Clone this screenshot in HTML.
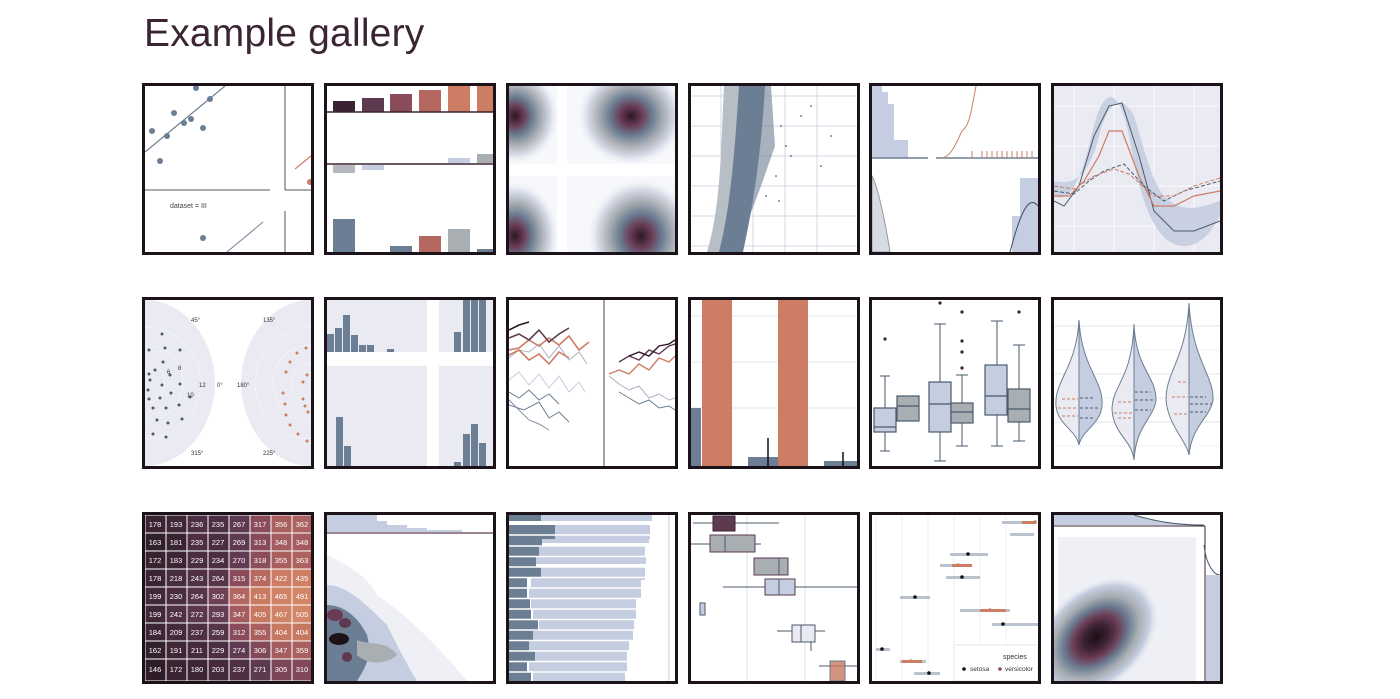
<!DOCTYPE html>
<html><head><meta charset="utf-8"><style>
body{margin:0;width:1400px;height:699px;background:#fff;position:relative;overflow:hidden;font-family:"Liberation Sans",sans-serif}
h1{position:absolute;left:144px;top:12px;margin:0;font-weight:400;font-size:39px;color:#3b2533;letter-spacing:0.2px}
.t{position:absolute;width:172px;height:172px;border:3px solid #1c1219;box-sizing:border-box;overflow:hidden;background:#fff}
.t svg{display:block;width:166px;height:166px}
</style></head><body>
<h1>Example gallery</h1>

<!-- Row 1 -->
<div class="t" style="left:142px;top:83px"><svg viewBox="0 0 166 166">
<line x1="0" y1="66" x2="80" y2="0" stroke="#6c7e93" stroke-width="1.2"/>
<g fill="#6c7e93"><circle cx="51" cy="2" r="3"/><circle cx="65" cy="13" r="3"/><circle cx="29" cy="27" r="3"/><circle cx="39" cy="37" r="3"/><circle cx="46" cy="33" r="3"/><circle cx="58" cy="42" r="3"/><circle cx="22" cy="50" r="3"/><circle cx="7" cy="45" r="3"/><circle cx="15" cy="75" r="3"/><circle cx="58" cy="152" r="3"/></g>
<line x1="0" y1="104" x2="125" y2="104" stroke="#555" stroke-width="1"/>
<line x1="140" y1="0" x2="140" y2="104" stroke="#555" stroke-width="1"/>
<line x1="140" y1="104" x2="166" y2="104" stroke="#555"/>
<line x1="150" y1="83" x2="166" y2="70" stroke="#cc7d63" stroke-width="1.2"/><circle cx="165" cy="96" r="3" fill="#cc7d63"/>
<text x="25" y="122" font-size="7" fill="#444">dataset = III</text>
<line x1="140" y1="125" x2="140" y2="166" stroke="#555"/>
<line x1="82" y1="166" x2="118" y2="136" stroke="#8a96a8" stroke-width="1.2"/>
</svg></div>

<div class="t" style="left:324px;top:83px"><svg viewBox="0 0 166 166">
<rect x="6" y="15" width="22" height="11" fill="#3b2233"/><rect x="35" y="12" width="22" height="14" fill="#5e3a51"/><rect x="63" y="8" width="22" height="18" fill="#8a4c5b"/><rect x="92" y="4" width="22" height="22" fill="#b4685f"/><rect x="121" y="0" width="22" height="26" fill="#cc7d63"/><rect x="150" y="0" width="18" height="26" fill="#cc7d63"/>
<line x1="0" y1="26" x2="166" y2="26" stroke="#3b2233" stroke-width="1.5"/>
<rect x="121" y="72" width="22" height="5" fill="#c5cde0"/><rect x="150" y="68" width="18" height="9" fill="#a9aeb3"/>
<line x1="0" y1="78" x2="166" y2="78" stroke="#3b2233" stroke-width="1.5"/>
<rect x="6" y="79" width="22" height="8" fill="#b5b8bc"/><rect x="35" y="79" width="22" height="5" fill="#c5cde0"/>
<rect x="6" y="133" width="22" height="33" fill="#6c7e93"/><rect x="63" y="160" width="22" height="6" fill="#6c7e93"/><rect x="92" y="150" width="22" height="16" fill="#b4685f"/><rect x="121" y="143" width="22" height="23" fill="#a9aeb3"/><rect x="150" y="163" width="18" height="3" fill="#6c7e93"/>
</svg></div>

<div class="t" style="left:506px;top:83px"><svg viewBox="0 0 166 166"><defs>
<radialGradient id="k1"><stop offset="0" stop-color="#2b1825"/><stop offset=".2" stop-color="#6a3b55"/><stop offset=".4" stop-color="#6c7e93"/><stop offset=".6" stop-color="#a9aeb3"/><stop offset=".8" stop-color="#d4d9e6"/><stop offset="1" stop-color="#f4f5f9" stop-opacity="0"/></radialGradient></defs>
<rect width="166" height="166" fill="#f7f8fb"/><rect x="0" y="78" width="166" height="12" fill="#fff"/><rect x="48" y="0" width="10" height="166" fill="#fff"/>
<ellipse cx="6" cy="30" rx="44" ry="48" fill="url(#k1)"/><ellipse cx="122" cy="30" rx="54" ry="50" fill="url(#k1)"/>
<ellipse cx="6" cy="150" rx="44" ry="55" fill="url(#k1)"/><ellipse cx="132" cy="150" rx="54" ry="58" fill="url(#k1)"/>
</svg></div>

<div class="t" style="left:688px;top:83px"><svg viewBox="0 0 166 166">
<g stroke="#c8cedc" stroke-width=".8"><line x1="0" y1="10" x2="166" y2="10"/><line x1="0" y1="40" x2="166" y2="40"/><line x1="0" y1="70" x2="166" y2="70"/><line x1="0" y1="100" x2="166" y2="100"/><line x1="0" y1="130" x2="166" y2="130"/><line x1="0" y1="160" x2="166" y2="160"/><line x1="30" y1="0" x2="30" y2="166"/><line x1="62" y1="0" x2="62" y2="166"/><line x1="94" y1="0" x2="94" y2="166"/><line x1="126" y1="0" x2="126" y2="166"/></g>
<path d="M16 166 C30 120 30 60 33 0 L60 0 C60 60 50 120 40 166Z" fill="#b8bec6"/>
<path d="M28 166 C40 120 44 60 48 0 L74 0 C70 70 62 120 52 166Z" fill="#6c7e93"/>
<path d="M60 0 L80 0 L84 60 L70 100 L55 140Z" fill="#6c7e93" opacity=".6"/>
<g fill="#3b2233"><circle cx="90" cy="40" r=".8"/><circle cx="100" cy="70" r=".8"/><circle cx="110" cy="30" r=".8"/><circle cx="120" cy="20" r=".8"/><circle cx="85" cy="90" r=".8"/><circle cx="95" cy="60" r=".8"/><circle cx="140" cy="50" r=".8"/><circle cx="130" cy="80" r=".8"/><circle cx="75" cy="110" r=".8"/><circle cx="88" cy="115" r=".8"/></g>
</svg></div>

<div class="t" style="left:869px;top:83px"><svg viewBox="0 0 166 166">
<path d="M0 0 H10 V6 H16 V18 H22 V54 H36 V72 H0Z" fill="#c5cde0"/>
<line x1="0" y1="72" x2="56" y2="72" stroke="#6c7e93" stroke-width="1.5"/><line x1="64" y1="72" x2="166" y2="72" stroke="#6c7e93" stroke-width="1.5"/>
<path d="M70 72 C80 70 85 55 90 45 C98 40 100 20 104 0" fill="none" stroke="#cc7d63" stroke-width="1"/>
<g stroke="#cc7d63" stroke-width="1"><line x1="100" y1="65" x2="100" y2="72"/><line x1="110" y1="65" x2="110" y2="72"/><line x1="115" y1="65" x2="115" y2="72"/><line x1="120" y1="65" x2="120" y2="72"/><line x1="125" y1="65" x2="125" y2="72"/><line x1="130" y1="65" x2="130" y2="72"/><line x1="135" y1="65" x2="135" y2="72"/><line x1="140" y1="65" x2="140" y2="72"/><line x1="145" y1="65" x2="145" y2="72"/><line x1="150" y1="65" x2="150" y2="72"/><line x1="155" y1="65" x2="155" y2="72"/><line x1="160" y1="65" x2="160" y2="72"/></g>
<path d="M0 90 C6 100 14 140 18 166 L0 166Z" fill="#d5dae4" stroke="#999"/>
<path d="M140 166 V130 H148 V92 H166 V166Z" fill="#c5cde0"/><path d="M138 166 C150 120 158 110 166 120" fill="none" stroke="#3b4a5a"/>
</svg></div>

<div class="t" style="left:1051px;top:83px"><svg viewBox="0 0 166 166">
<rect width="166" height="166" fill="#eaeaf2"/>
<g stroke="#fff" stroke-width=".8"><line x1="0" y1="20" x2="166" y2="20"/><line x1="0" y1="60" x2="166" y2="60"/><line x1="0" y1="100" x2="166" y2="100"/><line x1="0" y1="140" x2="166" y2="140"/><line x1="20" y1="0" x2="20" y2="166"/><line x1="60" y1="0" x2="60" y2="166"/><line x1="100" y1="0" x2="100" y2="166"/><line x1="140" y1="0" x2="140" y2="166"/></g>
<path d="M0 110 C20 120 30 80 40 40 C50 0 65 0 75 50 C85 110 100 160 130 160 C150 160 160 140 166 130 V115 C150 120 130 130 110 110 C95 90 90 60 80 30 C70 10 55 10 45 50 C35 90 20 100 0 95Z" fill="#c5cde0" opacity=".9"/>
<polyline points="0,115 10,120 25,100 40,50 55,20 68,17 85,70 100,125 120,145 140,145 166,135" fill="none" stroke="#4a5a6c" stroke-width="1"/>
<polyline points="0,110 15,110 30,95 45,70 55,45 68,45 85,90 100,120 120,120 140,110 166,105" fill="none" stroke="#cc7d63" stroke-width="1.2"/>
<polyline points="0,105 20,108 35,95 50,85 70,78 90,100 110,115 130,105 166,95" fill="none" stroke="#4a5a6c" stroke-width="1" stroke-dasharray="4 2"/>
<polyline points="0,100 20,103 40,90 60,83 75,88 100,110 120,110 140,100 166,92" fill="none" stroke="#cc7d63" stroke-width="1" stroke-dasharray="4 2"/>
</svg></div>

<!-- Row 2 -->
<div class="t" style="left:142px;top:297px"><svg viewBox="0 0 166 166">
<path d="M0 0 C40 0 70 40 70 83 C70 126 40 166 0 166Z" fill="#eaeaf2"/><path d="M166 0 C126 0 96 40 96 83 C96 126 126 166 166 166Z" fill="#eaeaf2"/>
<g fill="none" stroke="#fff" stroke-dasharray="1.5 1.5" stroke-width=".7"><circle cx="0" cy="83" r="20"/><circle cx="0" cy="83" r="38"/><circle cx="0" cy="83" r="56"/><circle cx="166" cy="83" r="20"/><circle cx="166" cy="83" r="38"/><circle cx="166" cy="83" r="56"/></g>
<g font-size="6" fill="#333"><text x="46" y="22">45°</text><text x="118" y="22">135°</text><text x="54" y="87">12</text><text x="42" y="97">10</text><text x="33" y="70">8</text><text x="22" y="74">6</text><text x="72" y="87">0°</text><text x="92" y="87">180°</text><text x="46" y="155">315°</text><text x="118" y="155">225°</text></g>
<g fill="#4a5a6c"><circle cx="17" cy="34" r="1.5"/><circle cx="4" cy="50" r="1.5"/><circle cx="20" cy="48" r="1.5"/><circle cx="35" cy="50" r="1.5"/><circle cx="18" cy="62" r="1.5"/><circle cx="10" cy="70" r="1.5"/><circle cx="25" cy="75" r="1.5"/><circle cx="4" cy="74" r="1.5"/><circle cx="17" cy="85" r="1.5"/><circle cx="35" cy="84" r="1.5"/><circle cx="3" cy="90" r="1.5"/><circle cx="26" cy="93" r="1.5"/><circle cx="45" cy="97" r="1.5"/><circle cx="15" cy="98" r="1.5"/><circle cx="4" cy="99" r="1.5"/><circle cx="34" cy="105" r="1.5"/><circle cx="21" cy="108" r="1.5"/><circle cx="8" cy="108" r="1.5"/><circle cx="37" cy="119" r="1.5"/><circle cx="12" cy="120" r="1.5"/><circle cx="23" cy="123" r="1.5"/><circle cx="8" cy="134" r="1.5"/><circle cx="21" cy="137" r="1.5"/><circle cx="5" cy="80" r="1.5"/></g>
<g fill="#cc7d63"><circle cx="161" cy="48" r="1.5"/><circle cx="152" cy="53" r="1.5"/><circle cx="145" cy="62" r="1.5"/><circle cx="162" cy="75" r="1.5"/><circle cx="141" cy="72" r="1.5"/><circle cx="158" cy="82" r="1.5"/><circle cx="138" cy="93" r="1.5"/><circle cx="158" cy="99" r="1.5"/><circle cx="160" cy="106" r="1.5"/><circle cx="140" cy="104" r="1.5"/><circle cx="163" cy="112" r="1.5"/><circle cx="141" cy="115" r="1.5"/><circle cx="145" cy="125" r="1.5"/><circle cx="153" cy="134" r="1.5"/><circle cx="162" cy="141" r="1.5"/></g>
</svg></div>

<div class="t" style="left:324px;top:297px"><svg viewBox="0 0 166 166">
<rect width="100" height="52" fill="#eaeaf2"/><rect x="112" width="54" height="52" fill="#eaeaf2"/><rect y="66" width="100" height="100" fill="#eaeaf2"/><rect x="112" y="66" width="54" height="100" fill="#eaeaf2"/>
<g fill="#6c7e93"><rect x="0" y="34" width="7" height="18"/><rect x="8" y="28" width="7" height="24"/><rect x="16" y="15" width="7" height="37"/><rect x="24" y="35" width="7" height="17"/><rect x="32" y="45" width="7" height="7"/><rect x="40" y="45" width="7" height="7"/><rect x="60" y="49" width="7" height="3"/><rect x="127" y="32" width="7" height="20"/><rect x="136" y="0" width="7" height="52"/><rect x="144" y="0" width="7" height="52"/><rect x="152" y="0" width="7" height="52"/>
<rect x="9" y="117" width="7" height="49"/><rect x="17" y="146" width="7" height="20"/><rect x="136" y="134" width="7" height="32"/><rect x="144" y="124" width="7" height="42"/><rect x="152" y="143" width="7" height="23"/><rect x="127" y="162" width="7" height="4"/></g>
</svg></div>

<div class="t" style="left:506px;top:297px"><svg viewBox="0 0 166 166">
<line x1="95" y1="0" x2="95" y2="166" stroke="#5e3a51"/>
<g fill="none" stroke-width="1"><polyline points="0,58 10,50 20,52 30,44 40,58 50,46 60,60 70,52 78,64" stroke="#a9b4c4"/><polyline points="0,80 10,72 20,85 30,74 40,88 50,76 60,92 70,82 76,92" stroke="#c5cde0"/><polyline points="0,92 10,98 20,90 30,100 40,94 50,104" stroke="#6c7e93"/><polyline points="0,105 15,110 30,102 40,118 50,112 60,122" stroke="#6c7e93"/><polyline points="0,100 10,110 20,120 30,124 40,130" stroke="#8290a4"/></g>
<g fill="none" stroke-width="1.6"><polyline points="0,50 10,48 20,40 30,46 40,38 50,45 60,36 70,50 80,42" stroke="#cc7d63"/><polyline points="0,55 10,50 20,60 30,54 40,64 50,52 60,58" stroke="#cc7d63"/><polyline points="0,38 10,34 20,40 30,30 40,42 50,34 60,28" stroke="#5e3a51"/><polyline points="0,30 10,25 20,22" stroke="#2b1825"/></g>
<g fill="none" stroke-width="1.4"><polyline points="100,74 110,70 120,74 130,64 140,70 150,58 160,62 166,56" stroke="#cc7d63"/><polyline points="110,62 120,56 130,60 140,50 150,54 160,46 166,44" stroke="#5e3a51"/><polyline points="120,56 130,52 140,56 150,46 160,44 166,40" stroke="#2b1825"/><polyline points="100,76 110,84 120,90 130,86 140,98 150,94 160,100 166,98" stroke="#a9b4c4" stroke-width="1"/><polyline points="110,92 120,98 130,104 140,100 150,108 160,106 166,110" stroke="#6c7e93" stroke-width="1"/></g>
</svg></div>

<div class="t" style="left:688px;top:297px"><svg viewBox="0 0 166 166">
<g stroke="#e1e4ec"><line x1="0" y1="16" x2="166" y2="16"/><line x1="0" y1="62" x2="166" y2="62"/><line x1="0" y1="108" x2="166" y2="108"/></g>
<rect x="0" y="108" width="10" height="58" fill="#6c7e93"/><rect x="11" y="0" width="30" height="166" fill="#cc7d63"/><rect x="57" y="157" width="30" height="9" fill="#6c7e93"/><line x1="77" y1="138" x2="77" y2="166" stroke="#111" stroke-width="1.5"/><rect x="87" y="0" width="30" height="166" fill="#cc7d63"/><rect x="133" y="161" width="33" height="5" fill="#6c7e93"/><line x1="152" y1="152" x2="152" y2="166" stroke="#111" stroke-width="1.5"/>
</svg></div>

<div class="t" style="left:869px;top:297px"><svg viewBox="0 0 166 166">
<g stroke="#4a5a6c" stroke-width="1" fill="none"><line x1="13" y1="76" x2="13" y2="151"/><line x1="8" y1="151" x2="18" y2="151"/><line x1="8" y1="76" x2="18" y2="76"/><line x1="35" y1="96" x2="35" y2="116"/><line x1="30" y1="116" x2="40" y2="116"/><line x1="68" y1="24" x2="68" y2="161"/><line x1="62" y1="24" x2="74" y2="24"/><line x1="62" y1="161" x2="74" y2="161"/><line x1="90" y1="75" x2="90" y2="146"/><line x1="84" y1="146" x2="96" y2="146"/><line x1="84" y1="75" x2="96" y2="75"/><line x1="125" y1="21" x2="125" y2="146"/><line x1="119" y1="21" x2="131" y2="21"/><line x1="119" y1="146" x2="131" y2="146"/><line x1="147" y1="45" x2="147" y2="141"/><line x1="141" y1="141" x2="153" y2="141"/><line x1="141" y1="45" x2="153" y2="45"/></g>
<g stroke="#4a5a6c" stroke-width="1.2"><rect x="2" y="108" width="22" height="24" fill="#c5cde0"/><line x1="2" y1="127" x2="24" y2="127"/><rect x="25" y="96" width="22" height="25" fill="#a9aeb3"/><line x1="25" y1="106" x2="47" y2="106"/><rect x="57" y="82" width="22" height="50" fill="#c5cde0"/><line x1="57" y1="104" x2="79" y2="104"/><rect x="79" y="103" width="22" height="20" fill="#a9aeb3"/><line x1="79" y1="112" x2="101" y2="112"/><rect x="113" y="65" width="22" height="50" fill="#c5cde0"/><line x1="113" y1="96" x2="135" y2="96"/><rect x="136" y="89" width="22" height="33" fill="#a9aeb3"/><line x1="136" y1="109" x2="158" y2="109"/></g>
<g fill="#3b2233"><circle cx="13" cy="39" r="1.6"/><circle cx="68" cy="3" r="1.6"/><circle cx="90" cy="12" r="1.6"/><circle cx="90" cy="41" r="1.6"/><circle cx="90" cy="52" r="1.6"/><circle cx="90" cy="68" r="1.6"/><circle cx="147" cy="12" r="1.6"/></g>
</svg></div>

<div class="t" style="left:1051px;top:297px"><svg viewBox="0 0 166 166">
<g stroke="#e1e4ec"><line x1="0" y1="26" x2="166" y2="26"/><line x1="0" y1="74" x2="166" y2="74"/><line x1="0" y1="122" x2="166" y2="122"/><line x1="0" y1="50" x2="166" y2="50" stroke-dasharray="1 1"/><line x1="0" y1="98" x2="166" y2="98" stroke-dasharray="1 1"/><line x1="0" y1="146" x2="166" y2="146" stroke-dasharray="1 1"/></g>
<g stroke="#6c7e93" stroke-width="1"><path d="M25 20 C22 70 0 80 2 106 C4 125 22 130 25 145Z" fill="#eaeaf2"/><path d="M25 20 C28 70 50 80 48 106 C46 125 28 130 25 145Z" fill="#c5cde0"/><line x1="25" y1="20" x2="25" y2="145"/>
<path d="M80 24 C78 80 58 85 58 110 C60 135 78 140 80 160Z" fill="#eaeaf2"/><path d="M80 24 C82 70 102 75 102 100 C100 118 82 125 80 160Z" fill="#c5cde0"/><line x1="80" y1="24" x2="80" y2="160"/>
<path d="M135 3 C132 60 112 70 112 100 C114 125 132 140 135 155Z" fill="#eaeaf2"/><path d="M135 3 C138 60 160 75 159 100 C156 118 138 125 135 155Z" fill="#c5cde0"/><line x1="135" y1="3" x2="135" y2="155"/></g>
<g stroke-dasharray="3 2" stroke-width="1"><line x1="8" y1="99" x2="24" y2="99" stroke="#cc7d63"/><line x1="4" y1="108" x2="24" y2="108" stroke="#cc7d63"/><line x1="8" y1="116" x2="24" y2="116" stroke="#cc7d63"/><line x1="26" y1="98" x2="40" y2="98" stroke="#4a5a6c"/><line x1="26" y1="108" x2="46" y2="108" stroke="#4a5a6c"/><line x1="26" y1="118" x2="40" y2="118" stroke="#4a5a6c"/><line x1="64" y1="102" x2="79" y2="102" stroke="#cc7d63"/><line x1="60" y1="113" x2="79" y2="113" stroke="#cc7d63"/><line x1="64" y1="118" x2="79" y2="118" stroke="#cc7d63"/><line x1="81" y1="92" x2="97" y2="92" stroke="#4a5a6c"/><line x1="81" y1="100" x2="101" y2="100" stroke="#4a5a6c"/><line x1="81" y1="110" x2="97" y2="110" stroke="#4a5a6c"/><line x1="124" y1="82" x2="134" y2="82" stroke="#cc7d63"/><line x1="118" y1="97" x2="134" y2="97" stroke="#cc7d63"/><line x1="120" y1="114" x2="134" y2="114" stroke="#cc7d63"/><line x1="136" y1="97" x2="152" y2="97" stroke="#4a5a6c"/><line x1="136" y1="104" x2="158" y2="104" stroke="#4a5a6c"/><line x1="136" y1="112" x2="152" y2="112" stroke="#4a5a6c"/></g>
</svg></div>

<!-- Row 3 -->
<div class="t" style="left:142px;top:512px"><svg viewBox="0 0 166 166" font-size="7.5" text-anchor="middle" fill="#fff">
<g stroke="#fff" stroke-width="1">
<rect x="0" y="0" width="21" height="18" fill="#3a2433"/><rect x="21" y="0" width="21" height="18" fill="#3e2636"/><rect x="42" y="0" width="21" height="18" fill="#4d2e42"/><rect x="63" y="0" width="21" height="18" fill="#4c2e42"/><rect x="84" y="0" width="21" height="18" fill="#5e3a51"/><rect x="105" y="0" width="21" height="18" fill="#8a4c5b"/><rect x="126" y="0" width="21" height="18" fill="#a95f5e"/><rect x="147" y="0" width="21" height="18" fill="#ad625f"/>
<rect x="0" y="18" width="21" height="18" fill="#33202d"/><rect x="21" y="18" width="21" height="18" fill="#3a2433"/><rect x="42" y="18" width="21" height="18" fill="#4d2e42"/><rect x="63" y="18" width="21" height="18" fill="#4a2d40"/><rect x="84" y="18" width="21" height="18" fill="#5e3a51"/><rect x="105" y="18" width="21" height="18" fill="#864a5a"/><rect x="126" y="18" width="21" height="18" fill="#a45c5e"/><rect x="147" y="18" width="21" height="18" fill="#a45c5e"/>
<rect x="0" y="36" width="21" height="18" fill="#37222f"/><rect x="21" y="36" width="21" height="18" fill="#3b2433"/><rect x="42" y="36" width="21" height="18" fill="#4b2d41"/><rect x="63" y="36" width="21" height="18" fill="#4c2e42"/><rect x="84" y="36" width="21" height="18" fill="#603b52"/><rect x="105" y="36" width="21" height="18" fill="#8c4d5b"/><rect x="126" y="36" width="21" height="18" fill="#a95f5e"/><rect x="147" y="36" width="21" height="18" fill="#ad625f"/>
<rect x="0" y="54" width="21" height="18" fill="#3a2433"/><rect x="21" y="54" width="21" height="18" fill="#482c3f"/><rect x="42" y="54" width="21" height="18" fill="#4f3045"/><rect x="63" y="54" width="21" height="18" fill="#573549"/><rect x="84" y="54" width="21" height="18" fill="#8a4c5b"/><rect x="105" y="54" width="21" height="18" fill="#b7695f"/><rect x="126" y="54" width="21" height="18" fill="#cc7d63"/><rect x="147" y="54" width="21" height="18" fill="#cf8064"/>
<rect x="0" y="72" width="21" height="18" fill="#412839"/><rect x="21" y="72" width="21" height="18" fill="#4b2d41"/><rect x="42" y="72" width="21" height="18" fill="#573549"/><rect x="63" y="72" width="21" height="18" fill="#6e4055"/><rect x="84" y="72" width="21" height="18" fill="#b2665f"/><rect x="105" y="72" width="21" height="18" fill="#c97a62"/><rect x="126" y="72" width="21" height="18" fill="#d08266"/><rect x="147" y="72" width="21" height="18" fill="#d38568"/>
<rect x="0" y="90" width="21" height="18" fill="#412839"/><rect x="21" y="90" width="21" height="18" fill="#4f3045"/><rect x="42" y="90" width="21" height="18" fill="#5a374c"/><rect x="63" y="90" width="21" height="18" fill="#643c53"/><rect x="84" y="90" width="21" height="18" fill="#a45c5e"/><rect x="105" y="90" width="21" height="18" fill="#c67861"/><rect x="126" y="90" width="21" height="18" fill="#d08266"/><rect x="147" y="90" width="21" height="18" fill="#d48669"/>
<rect x="0" y="108" width="21" height="18" fill="#3c2535"/><rect x="21" y="108" width="21" height="18" fill="#452a3c"/><rect x="42" y="108" width="21" height="18" fill="#4e2f44"/><rect x="63" y="108" width="21" height="18" fill="#573549"/><rect x="84" y="108" width="21" height="18" fill="#8a4c5b"/><rect x="105" y="108" width="21" height="18" fill="#a95f5e"/><rect x="126" y="108" width="21" height="18" fill="#c67861"/><rect x="147" y="108" width="21" height="18" fill="#c67861"/>
<rect x="0" y="126" width="21" height="18" fill="#33202d"/><rect x="21" y="126" width="21" height="18" fill="#3e2636"/><rect x="42" y="126" width="21" height="18" fill="#452a3c"/><rect x="63" y="126" width="21" height="18" fill="#4c2e42"/><rect x="84" y="126" width="21" height="18" fill="#5f3a51"/><rect x="105" y="126" width="21" height="18" fill="#824859"/><rect x="126" y="126" width="21" height="18" fill="#a45c5e"/><rect x="147" y="126" width="21" height="18" fill="#aa605e"/>
<rect x="0" y="144" width="21" height="22" fill="#2e1d29"/><rect x="21" y="144" width="21" height="22" fill="#3a2433"/><rect x="42" y="144" width="21" height="22" fill="#3c2535"/><rect x="63" y="144" width="21" height="22" fill="#452a3c"/><rect x="84" y="144" width="21" height="22" fill="#4e2f44"/><rect x="105" y="144" width="21" height="22" fill="#5e3a51"/><rect x="126" y="144" width="21" height="22" fill="#7d4658"/><rect x="147" y="144" width="21" height="22" fill="#82485a"/></g>
<g><text x="10" y="12">178</text><text x="31" y="12">193</text><text x="52" y="12">236</text><text x="73" y="12">235</text><text x="94" y="12">267</text><text x="115" y="12">317</text><text x="136" y="12">356</text><text x="157" y="12">362</text>
<text x="10" y="30">163</text><text x="31" y="30">181</text><text x="52" y="30">235</text><text x="73" y="30">227</text><text x="94" y="30">269</text><text x="115" y="30">313</text><text x="136" y="30">348</text><text x="157" y="30">348</text>
<text x="10" y="48">172</text><text x="31" y="48">183</text><text x="52" y="48">229</text><text x="73" y="48">234</text><text x="94" y="48">270</text><text x="115" y="48">318</text><text x="136" y="48">355</text><text x="157" y="48">363</text>
<text x="10" y="66">178</text><text x="31" y="66">218</text><text x="52" y="66">243</text><text x="73" y="66">264</text><text x="94" y="66">315</text><text x="115" y="66">374</text><text x="136" y="66">422</text><text x="157" y="66">435</text>
<text x="10" y="84">199</text><text x="31" y="84">230</text><text x="52" y="84">264</text><text x="73" y="84">302</text><text x="94" y="84">364</text><text x="115" y="84">413</text><text x="136" y="84">465</text><text x="157" y="84">491</text>
<text x="10" y="102">199</text><text x="31" y="102">242</text><text x="52" y="102">272</text><text x="73" y="102">293</text><text x="94" y="102">347</text><text x="115" y="102">405</text><text x="136" y="102">467</text><text x="157" y="102">505</text>
<text x="10" y="120">184</text><text x="31" y="120">209</text><text x="52" y="120">237</text><text x="73" y="120">259</text><text x="94" y="120">312</text><text x="115" y="120">355</text><text x="136" y="120">404</text><text x="157" y="120">404</text>
<text x="10" y="138">162</text><text x="31" y="138">191</text><text x="52" y="138">211</text><text x="73" y="138">229</text><text x="94" y="138">274</text><text x="115" y="138">306</text><text x="136" y="138">347</text><text x="157" y="138">359</text>
<text x="10" y="157">146</text><text x="31" y="157">172</text><text x="52" y="157">180</text><text x="73" y="157">203</text><text x="94" y="157">237</text><text x="115" y="157">271</text><text x="136" y="157">305</text><text x="157" y="157">310</text></g>
</svg></div>

<div class="t" style="left:324px;top:512px"><svg viewBox="0 0 166 166">
<path d="M0 0 H50 V6 H60 V10 H80 V13 H100 V15 H135 V17 H0Z" fill="#c5cde0"/>
<line x1="0" y1="18" x2="166" y2="18" stroke="#5e3a51" stroke-width="1.2"/>
<path d="M0 40 C20 50 40 60 50 80 C80 100 110 130 140 166 H0Z" fill="#eef0f5"/>
<path d="M0 70 C20 70 40 90 60 110 C70 130 80 150 90 166 H0Z" fill="#c5cde0"/>
<path d="M0 90 C15 90 30 100 40 120 C45 140 40 150 30 166 H0Z" fill="#6c7e93"/>
<ellipse cx="12" cy="124" rx="10" ry="6" fill="#1e1219"/><ellipse cx="8" cy="100" rx="8" ry="6" fill="#6a3b55"/><ellipse cx="18" cy="108" rx="6" ry="5" fill="#5e3a51"/><ellipse cx="20" cy="142" rx="5" ry="5" fill="#5e3a51"/>
<path d="M30 125 C40 130 60 125 70 140 C60 150 40 150 30 140Z" fill="#a9aeb3"/>
</svg></div>

<div class="t" style="left:506px;top:512px"><svg viewBox="0 0 166 166">
<g fill="#c5cde0"><rect x="30" y="0" width="113" height="6"/><rect x="45" y="10" width="96" height="14"/><rect x="32" y="20" width="108" height="8"/><rect x="30" y="31" width="106" height="13"/><rect x="27" y="41" width="110" height="8"/><rect x="30" y="52" width="106" height="13"/><rect x="22" y="62" width="110" height="12"/><rect x="20" y="72" width="112" height="12"/><rect x="22" y="83" width="105" height="12"/><rect x="24" y="93" width="103" height="12"/><rect x="30" y="104" width="95" height="12"/><rect x="24" y="114" width="100" height="12"/><rect x="20" y="124" width="100" height="12"/><rect x="24" y="134" width="94" height="12"/><rect x="20" y="144" width="98" height="12"/><rect x="24" y="154" width="92" height="12"/></g>
<g fill="#6c7e93"><rect x="0" y="0" width="32" height="6"/><rect x="0" y="10" width="46" height="14"/><rect x="0" y="21" width="33" height="11"/><rect x="0" y="31" width="30" height="11"/><rect x="0" y="42" width="27" height="11"/><rect x="0" y="52" width="32" height="11"/><rect x="0" y="63" width="18" height="11"/><rect x="0" y="73" width="18" height="11"/><rect x="0" y="84" width="21" height="11"/><rect x="0" y="94" width="22" height="11"/><rect x="0" y="105" width="29" height="11"/><rect x="0" y="115" width="24" height="11"/><rect x="0" y="126" width="20" height="11"/><rect x="0" y="136" width="26" height="11"/><rect x="0" y="147" width="18" height="11"/><rect x="0" y="157" width="22" height="9"/></g>
<g stroke="#fff" stroke-width="1.5"><line x1="0" y1="9" x2="150" y2="9"/><line x1="0" y1="20" x2="150" y2="20"/><line x1="0" y1="31" x2="150" y2="31"/><line x1="0" y1="41.5" x2="150" y2="41.5"/><line x1="0" y1="52" x2="150" y2="52"/><line x1="0" y1="62.5" x2="150" y2="62.5"/><line x1="0" y1="73" x2="150" y2="73"/><line x1="0" y1="83.5" x2="150" y2="83.5"/><line x1="0" y1="94" x2="150" y2="94"/><line x1="0" y1="104.5" x2="150" y2="104.5"/><line x1="0" y1="115" x2="150" y2="115"/><line x1="0" y1="125.5" x2="150" y2="125.5"/><line x1="0" y1="136" x2="150" y2="136"/><line x1="0" y1="146.5" x2="150" y2="146.5"/><line x1="0" y1="157" x2="150" y2="157"/></g>
<line x1="160" y1="0" x2="160" y2="166" stroke="#c5cde0"/>
</svg></div>

<div class="t" style="left:688px;top:512px"><svg viewBox="0 0 166 166">
<g stroke="#d5d9e3" stroke-width=".8"><line x1="56" y1="0" x2="56" y2="166"/><line x1="114" y1="0" x2="114" y2="166"/></g>
<g stroke="#4a5a6c" stroke-width="1" fill="none"><line x1="2" y1="8" x2="88" y2="8"/><line x1="0" y1="29" x2="70" y2="29"/><line x1="32" y1="72" x2="166" y2="72"/><line x1="86" y1="116" x2="134" y2="116"/><line x1="120" y1="125" x2="120" y2="136"/><line x1="128" y1="151" x2="166" y2="151"/></g>
<rect x="22" y="1" width="22" height="15" fill="#5e3a51" stroke="#3b2233"/>
<rect x="19" y="20" width="45" height="17" fill="#a9aeb3" stroke="#5e3a51"/><line x1="34" y1="20" x2="34" y2="37" stroke="#4a5a6c"/>
<rect x="63" y="43" width="34" height="17" fill="#a9aeb3" stroke="#5e3a51"/><line x1="88" y1="43" x2="88" y2="60" stroke="#4a5a6c"/>
<rect x="74" y="64" width="30" height="16" fill="#c5cde0" stroke="#5e3a51"/><line x1="88" y1="64" x2="88" y2="80" stroke="#4a5a6c"/>
<rect x="9" y="88" width="5" height="12" fill="#c5cde0" stroke="#4a5a6c"/>
<rect x="101" y="110" width="23" height="17" fill="#eaeaf2" stroke="#4a5a6c"/><line x1="110" y1="110" x2="110" y2="127" stroke="#4a5a6c"/>
<rect x="139" y="146" width="15" height="20" fill="#c87a62" stroke="#4a5a6c" opacity=".8"/>
</svg></div>

<div class="t" style="left:869px;top:512px"><svg viewBox="0 0 166 166">
<g stroke="#d5d9e3" stroke-width=".8" stroke-dasharray="1 1"><line x1="4" y1="0" x2="4" y2="166"/><line x1="30" y1="0" x2="30" y2="166"/><line x1="56" y1="0" x2="56" y2="166"/><line x1="82" y1="0" x2="82" y2="166"/><line x1="108" y1="0" x2="108" y2="166"/><line x1="134" y1="0" x2="134" y2="166"/></g>
<g fill="#a9b4c4" opacity=".8"><rect x="130" y="6" width="30" height="3"/><rect x="138" y="18" width="24" height="3"/><rect x="78" y="38" width="38" height="3"/><rect x="68" y="49" width="32" height="3"/><rect x="74" y="61" width="34" height="3"/><rect x="28" y="81" width="30" height="3"/><rect x="88" y="94" width="50" height="3"/><rect x="120" y="108" width="46" height="3"/><rect x="4" y="133" width="14" height="3"/><rect x="28" y="145" width="26" height="3"/><rect x="42" y="157" width="26" height="3"/></g>
<g fill="#cc7d63"><rect x="150" y="6" width="14" height="3"/><rect x="80" y="49" width="20" height="3"/><rect x="108" y="94" width="26" height="3"/><rect x="30" y="145" width="20" height="3"/></g>
<g fill="#111"><circle cx="96" cy="39" r="1.8"/><circle cx="90" cy="62" r="1.8"/><circle cx="43" cy="82" r="1.8"/><circle cx="131" cy="109" r="1.8"/><circle cx="10" cy="134" r="1.8"/><circle cx="57" cy="158" r="1.8"/></g>
<g fill="#cc7d63"><circle cx="86" cy="50" r="1.8"/><circle cx="118" cy="95" r="1.8"/><circle cx="39" cy="146" r="1.8"/><circle cx="163" cy="7" r="1.8"/></g>
<rect x="82" y="130" width="84" height="36" fill="#fff" stroke="#e5e7ee"/>
<text x="131" y="144" font-size="7" fill="#333">species</text>
<circle cx="92" cy="154" r="1.8" fill="#111"/><text x="98" y="156" font-size="6.5" fill="#333">setosa</text>
<circle cx="128" cy="154" r="1.8" fill="#8a4c5b"/><text x="133" y="156" font-size="6.5" fill="#333">versicolor</text>
</svg></div>

<div class="t" style="left:1051px;top:512px"><svg viewBox="0 0 166 166"><defs>
<radialGradient id="k2" cx=".5" cy=".5" r=".5"><stop offset="0" stop-color="#1a0f15"/><stop offset=".2" stop-color="#3b2233"/><stop offset=".35" stop-color="#6a3b55"/><stop offset=".52" stop-color="#6c7e93"/><stop offset=".68" stop-color="#a9aeb3"/><stop offset=".85" stop-color="#c5cde0"/><stop offset="1" stop-color="#eef0f5" stop-opacity="0"/></radialGradient></defs>
<path d="M0 0 H80 C100 4 110 8 140 10 H0Z" fill="#c5cde0"/>
<path d="M80 0 C100 6 120 10 150 10" fill="none" stroke="#4a5a6c"/>
<line x1="0" y1="11" x2="151" y2="11" stroke="#3b2233"/><line x1="151" y1="11" x2="151" y2="166" stroke="#3b2233"/>
<path d="M150 30 C152 50 160 60 166 60" fill="none" stroke="#4a5a6c"/><rect x="152" y="60" width="14" height="106" fill="#c5cde0"/>
<rect x="4" y="22" width="138" height="144" fill="#eef0f5"/>
<ellipse cx="42" cy="122" rx="72" ry="50" transform="rotate(-42 42 122)" fill="url(#k2)"/>
</svg></div>

</body></html>
